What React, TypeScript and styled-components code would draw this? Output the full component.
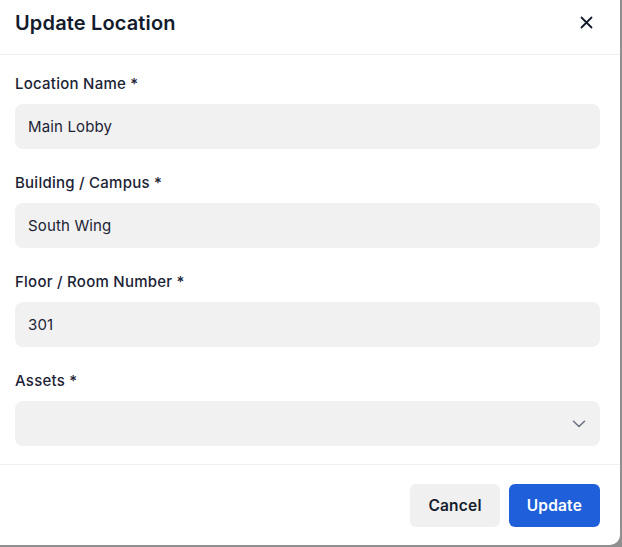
import * as React from 'react';
import styled, { createGlobalStyle } from 'styled-components';

const GlobalStyle = createGlobalStyle`
    html, body {
        margin: 0;
        padding: 0;
        background-color: #8f8f8f;
        font-family: Inter, "Noto Sans", sans-serif;
        color: #141c2e;
    }
    * {
        box-sizing: border-box;
    }
`;

const Dialog = styled.div`
    width: 620px;
    height: 545px;
    background-color: white;
    border-bottom-right-radius: 10px;
    display: flex;
    flex-direction: column;
    overflow: hidden;
`;
const Header = styled.div`
    height: 55px;
    display: flex;
    align-items: center;
    justify-content: space-between;
    padding: 0 27px 9px 15px;
    border-bottom: solid 1px #f0f0f0;
`;
const Title = styled.h2`
    margin: 0;
    font-size: 20px;
    font-weight: 600;
    letter-spacing: 0.15px;
    color: #131b2c;
`;
const CloseButton = styled.button`
    border: none;
    background: none;
    padding: 0;
    width: 14px;
    height: 14px;
    display: flex;
    align-items: center;
    justify-content: center;
    color: #131b2c;
    cursor: pointer;
`;
const Body = styled.div`
    flex: 1;
    padding: 18px 20px 0 15px;
    display: flex;
    flex-direction: column;
    gap: 23px;
`;
const Field = styled.div`
    display: flex;
    flex-direction: column;
    gap: 9px;
`;
const Label = styled.label`
    font-size: 15px;
    line-height: 22px;
    font-weight: 500;
    letter-spacing: 0.25px;
    color: #1b2335;
`;
const Input = styled.div<{ $select?: boolean }>`
    height: 45px;
    border-radius: 8px;
    background-color: #f1f1f1;
    padding: 0 14px 0 13px;
    display: flex;
    align-items: center;
    justify-content: ${p => (p.$select ? 'flex-end' : 'flex-start')};
    font-size: 15px;
    letter-spacing: 0.15px;
    color: #1b2335;
`;
const Footer = styled.div`
    height: 81px;
    border-top: solid 1px #f0f0f0;
    display: flex;
    align-items: flex-start;
    justify-content: flex-end;
    gap: 9px;
    padding: 19px 20px 0 0;
`;
const Button = styled.button<{ $primary?: boolean }>`
    height: 43px;
    border: none;
    border-radius: 6px;
    padding: 0 18px;
    font-family: Inter, "Noto Sans", sans-serif;
    font-size: 15.5px;
    font-weight: 600;
    letter-spacing: 0.2px;
    background-color: ${p => (p.$primary ? '#1f5fd9' : '#f0f0f0')};
    color: ${p => (p.$primary ? 'white' : '#141c2e')};
    cursor: pointer;
`;

const fields = [
    { label: 'Location Name', value: 'Main Lobby' },
    { label: 'Building / Campus', value: 'South Wing' },
    { label: 'Floor / Room Number', value: '301' },
];

const App: React.FunctionComponent = () => (
    <>
        <GlobalStyle />
        <Dialog>
            <Header>
                <Title>Update Location</Title>
                <CloseButton aria-label="Close">
                    <svg width="13" height="13" viewBox="0 0 13 13">
                        <path d="M1.5 1.5 L11.5 11.5 M11.5 1.5 L1.5 11.5" stroke="currentColor" strokeWidth="1.8" strokeLinecap="round" />
                    </svg>
                </CloseButton>
            </Header>
            <Body>
                {fields.map(item => (
                    <Field key={item.label}>
                        <Label>{item.label} *</Label>
                        <Input>{item.value}</Input>
                    </Field>
                ))}
                <Field>
                    <Label>Assets *</Label>
                    <Input $select>
                        <svg width="14" height="8" viewBox="0 0 14 8">
                            <path d="M1.5 1.2 L7 6.5 L12.5 1.2" fill="none" stroke="#6b7180" strokeWidth="1.5" strokeLinecap="round" strokeLinejoin="round" />
                        </svg>
                    </Input>
                </Field>
            </Body>
            <Footer>
                <Button>Cancel</Button>
                <Button $primary>Update</Button>
            </Footer>
        </Dialog>
    </>
);

export default App;
